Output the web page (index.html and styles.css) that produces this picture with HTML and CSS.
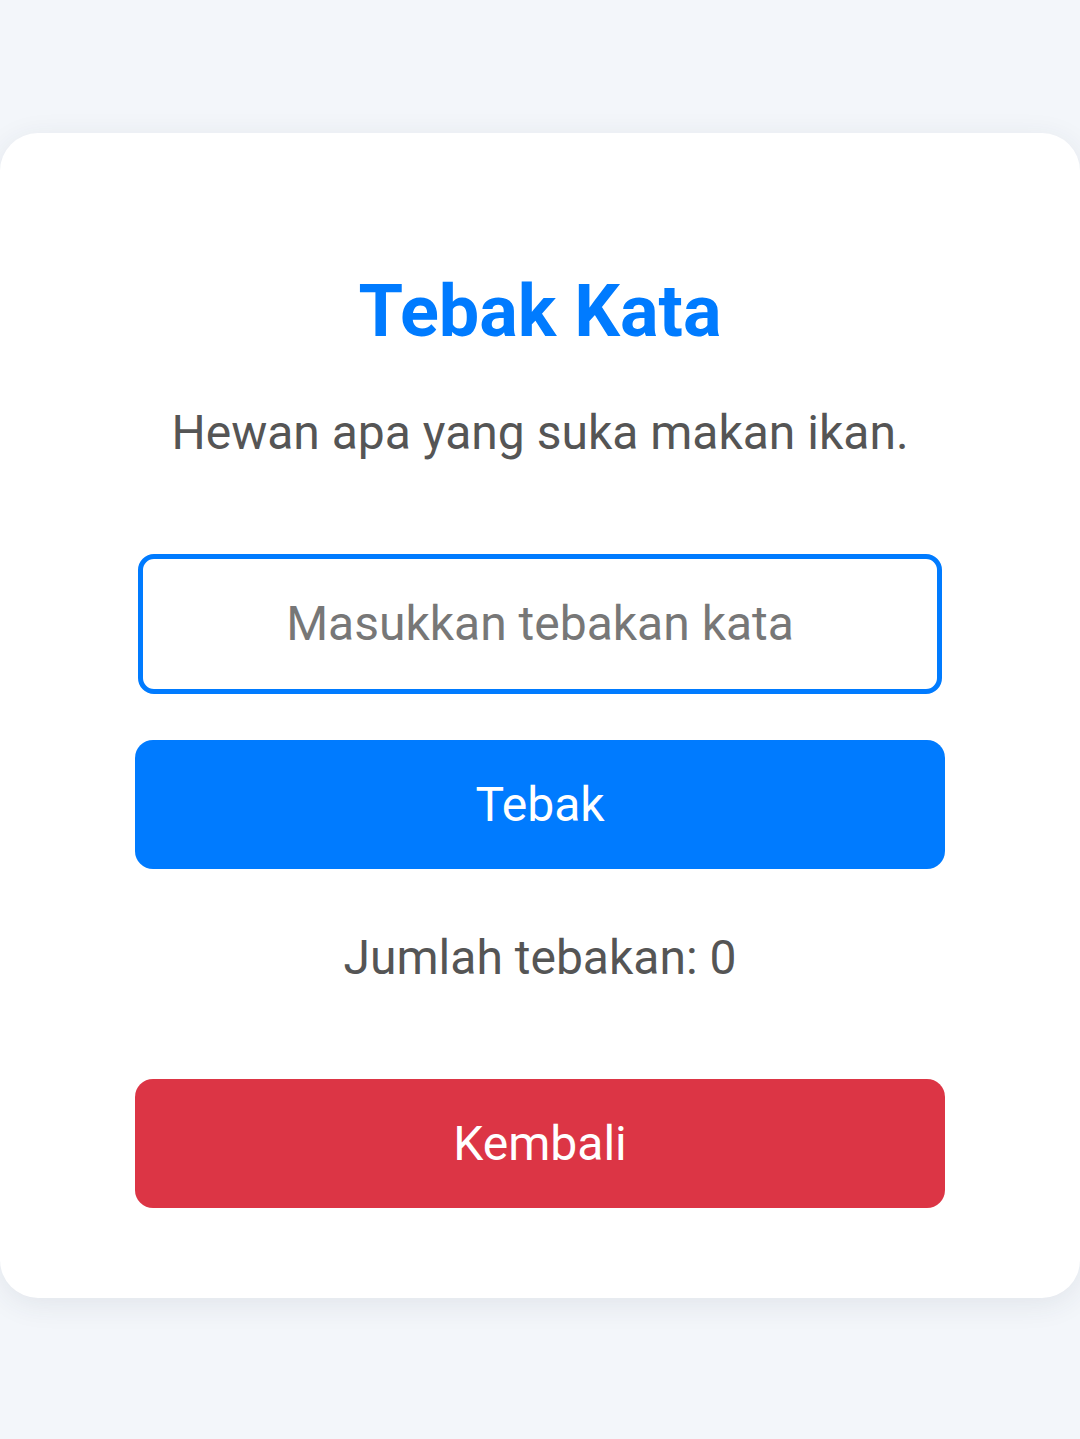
FILE: index.html
```html
<!DOCTYPE html>
<html lang="id">
<head>
<meta charset="utf-8">
<title>Tebak Kata</title>
<link rel="stylesheet" href="styles.css">
</head>
<body>
<main class="card">
  <h1 class="title">Tebak Kata</h1>
  <p class="question">Hewan apa yang suka makan ikan.</p>
  <input class="guess-input" type="text" placeholder="Masukkan tebakan kata">
  <button class="btn btn-primary">Tebak</button>
  <p class="count">Jumlah tebakan: 0</p>
  <button class="btn btn-danger">Kembali</button>
</main>
</body>
</html>
```

FILE: styles.css
```css
* { box-sizing: border-box; }

html, body {
  margin: 0;
  padding: 0;
}

body {
  background: #f3f6fa;
  font-family: Roboto, "Noto Sans", sans-serif;
  width: 1080px;
  height: 1439px;
  overflow: hidden;
  padding-top: 133px;
}

.card {
  background: #ffffff;
  border-radius: 38px;
  box-shadow: 0 6px 30px rgba(40, 50, 80, 0.09);
  height: 1165px;
  padding-top: 136px;
  display: flex;
  flex-direction: column;
  align-items: center;
}

.title {
  margin: 0;
  font-size: 72px;
  line-height: 1.2;
  font-weight: 700;
  color: #007bff;
}

.question {
  margin: 49px 0 0;
  font-size: 48px;
  line-height: 1.2;
  color: #555555;
}

.guess-input {
  margin-top: 92px;
  width: 804px;
  height: 140px;
  border: 5px solid #007bff;
  border-radius: 16px;
  font-family: inherit;
  font-size: 48px;
  text-align: center;
  color: #333;
  outline: none;
  background: #fff;
}

.guess-input::placeholder {
  color: #777777;
}

.btn {
  width: 810px;
  height: 129px;
  border: none;
  border-radius: 18px;
  font-family: inherit;
  font-size: 48px;
  color: #ffffff;
  padding: 0;
}

.btn-primary {
  margin-top: 46px;
  background: #007bff;
}

.btn-danger {
  margin-top: 92px;
  background: #dc3545;
}

.count {
  margin: 60px 0 0;
  font-size: 48px;
  line-height: 1.2;
  color: #555555;
}
```
